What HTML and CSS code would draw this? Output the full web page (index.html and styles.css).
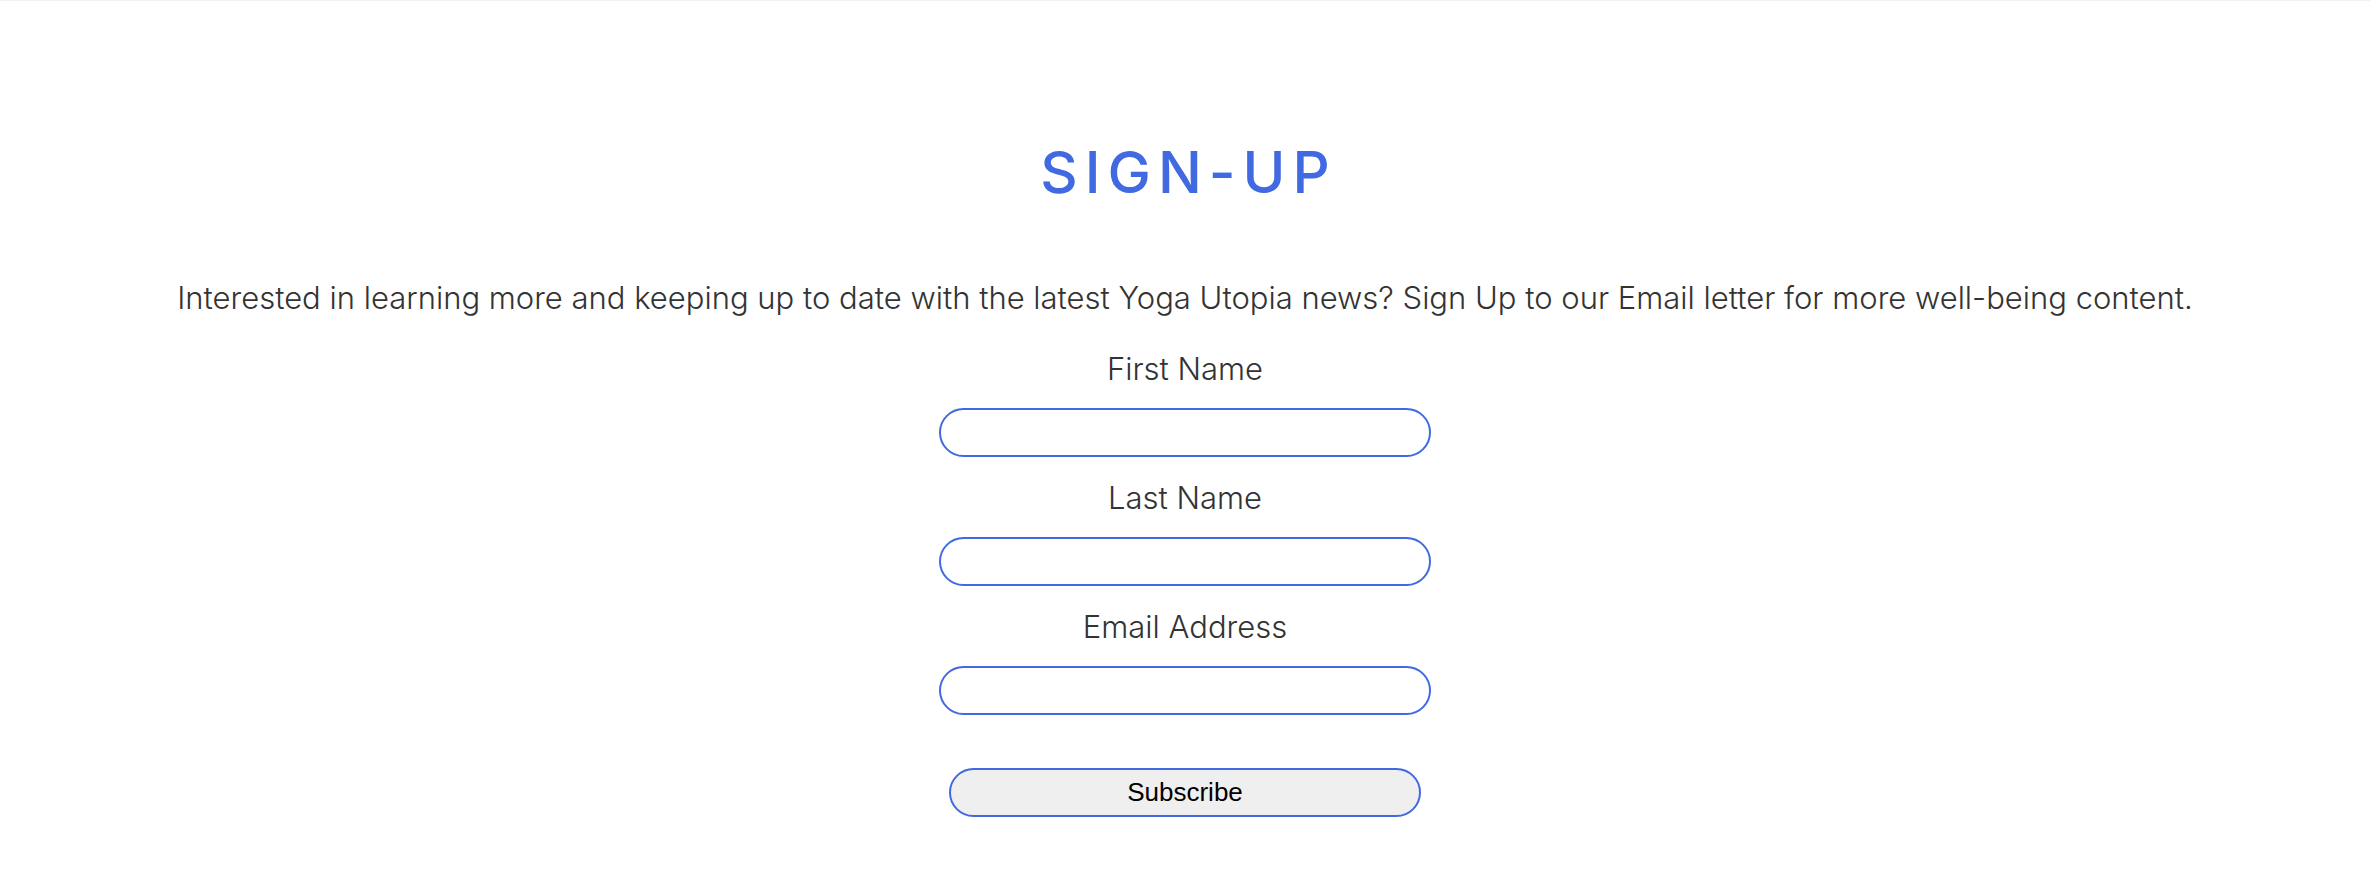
FILE: index.html
```html
<!DOCTYPE html>
<html lang="en">
<head>
<meta charset="utf-8">
<title>Sign-Up</title>
<link rel="stylesheet" href="styles.css">
</head>
<body>
<div class="topline"></div>
<section class="signup">
  <h2 class="signup-title">SIGN-UP</h2>
  <p class="signup-intro">Interested in learning more and keeping up to date with the latest Yoga Utopia news? Sign Up to our Email letter for more well-being content.</p>
  <form class="signup-form">
    <label class="field-label" for="fname">First Name</label>
    <input class="field-input" id="fname" type="text">
    <label class="field-label" for="lname">Last Name</label>
    <input class="field-input" id="lname" type="text">
    <label class="field-label" for="email">Email Address</label>
    <input class="field-input" id="email" type="email">
    <button class="subscribe" type="button">Subscribe</button>
  </form>
</section>
</body>
</html>
```
FILE: styles.css
```css
html, body {
  margin: 0;
  padding: 0;
  background: #ffffff;
}

body {
  font-family: "Inter", "Noto Sans", sans-serif;
  color: #333333;
}

.topline {
  height: 1px;
  background: #f1f1f1;
}

.signup {
  display: flex;
  flex-direction: column;
  align-items: center;
  text-align: center;
}

.signup-title {
  margin: 142px 0 0;
  padding-left: 7px;
  font-size: 58px;
  line-height: 1;
  font-weight: 500;
  letter-spacing: 7px;
  color: #4169e1;
}

.signup-intro {
  margin: 81px 0 0;
  font-size: 31px;
  line-height: 1;
  font-weight: 300;
  color: #333333;
}

.signup-form {
  display: flex;
  flex-direction: column;
  align-items: center;
  margin-top: 40px;
}

.field-label {
  font-size: 31px;
  line-height: 1;
  font-weight: 300;
  color: #333333;
}

.field-input {
  box-sizing: border-box;
  width: 492px;
  height: 49px;
  margin: 24px 0 25px;
  border: 2px solid #4169e1;
  border-radius: 25px;
  background: #ffffff;
  outline: none;
}

.subscribe {
  box-sizing: border-box;
  width: 472px;
  height: 49px;
  margin-top: 28px;
  border: 2px solid #4169e1;
  border-radius: 25px;
  background: #efefef;
  color: #000000;
  font-family: "Liberation Sans", Arial, sans-serif;
  font-size: 26px;
  padding: 0;
}
```
